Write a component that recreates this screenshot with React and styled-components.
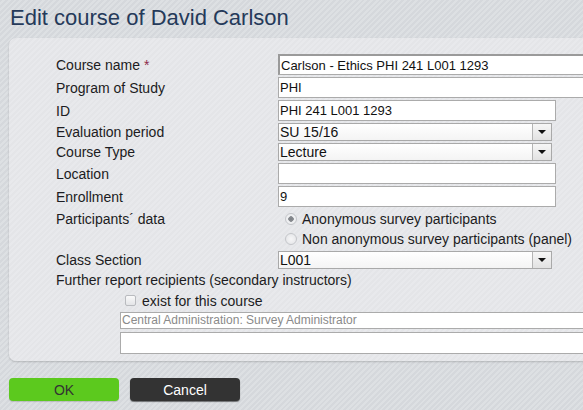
import React from "react";
import styled, { createGlobalStyle } from "styled-components";

const GlobalStyle = createGlobalStyle`
  html, body {
    margin: 0;
    padding: 0;
    overflow: hidden;
  }
  body {
    font-family: "Liberation Sans", Arial, sans-serif;
    background: repeating-linear-gradient(135deg, #d5d8dc 0px, #d5d8dc 2px, #dde0e3 2px, #dde0e3 4px);
    min-height: 410px;
  }
`;

const Page = styled.div`
  padding: 3px 0 0 9px;
  width: 620px;
`;

const Title = styled.h1`
  margin: 0 0 5px 1px;
  font-size: 22px;
  font-weight: normal;
  line-height: 30px;
  color: #253a5a;
`;

const Panel = styled.div`
  background: repeating-linear-gradient(135deg, #e4e5e8 0px, #e4e5e8 2px, #e8e9ec 2px, #e8e9ec 4px);
  border-radius: 7px;
  box-shadow: 0 1px 2px rgba(0, 0, 0, 0.18);
  padding: 16px 0 7px 47px;
`;

const Form = styled.div`
  display: grid;
  grid-template-columns: 222px 1fr;
  row-gap: 2px;
  align-items: center;
  color: #1c1c22;
  font-size: 14px;
`;

const Label = styled.div`
  line-height: 18px;
  ${(p) => p.top && "align-self: start; margin-top: 1px;"}
`;

const Star = styled.span`
  color: #8c2a4a;
`;

const TextBox = styled.div`
  box-sizing: border-box;
  height: ${(p) => p.h || 21}px;
  width: ${(p) => (p.w ? `${p.w}px` : "100%")};
  margin-top: ${(p) => p.mt || 0}px;
  background: #fff;
  border: 1px solid #ababab;
  ${(p) => p.focus && "border-top: 2px solid #9a9a9a; border-left: 2px solid #9a9a9a;"}
  padding: 0 1px;
  font-size: ${(p) => p.fs || 13}px;
  line-height: ${(p) => (p.h || 21) - 2}px;
  color: ${(p) => p.color || "#111"};
  white-space: nowrap;
  overflow: hidden;
`;

const SelectBox = styled.div`
  box-sizing: border-box;
  display: flex;
  height: 18px;
  width: 274px;
  background: linear-gradient(#fff, #f4f4f4);
  border: 1px solid #a9a9a9;
  font-size: 14px;
  line-height: 16px;
  color: #111;
`;

const SelectText = styled.div`
  flex: 1;
  padding-left: 1px;
`;

const SelectArrow = styled.div`
  width: 18px;
  border-left: 1px solid #b4b4b4;
  background: linear-gradient(#f6f6f6, #e2e2e2);
  display: flex;
  align-items: center;
  justify-content: center;

  &::after {
    content: "";
    border-left: 4px solid transparent;
    border-right: 4px solid transparent;
    border-top: 4px solid #111;
  }
`;

const RadioGroup = styled.div`
  display: flex;
  flex-direction: column;
`;

const RadioRow = styled.div`
  display: flex;
  align-items: center;
  height: 20px;
  padding-left: 7px;
  font-size: 14px;
  color: #1c1c22;
`;

const RadioDot = styled.span`
  box-sizing: border-box;
  width: 12px;
  height: 12px;
  border-radius: 50%;
  border: 1px solid #c4c6ca;
  background: ${(p) =>
    p.checked
      ? "radial-gradient(circle, #7c7f84 0, #8a8d92 2.5px, #eeeff1 3px)"
      : "radial-gradient(circle, #f6f6f7, #e2e3e6)"};
  margin-right: 5px;
`;

const WideLabel = styled.div`
  grid-column: 1 / -1;
  line-height: 18px;
`;

const Indent = styled.div`
  grid-column: 1 / -1;
  padding-left: 64px;
  display: flex;
  flex-direction: column;
`;

const CheckRow = styled.div`
  display: flex;
  align-items: center;
  height: 20px;
  padding-left: 5px;
  margin-bottom: 1px;
`;

const CheckBox = styled.span`
  box-sizing: border-box;
  width: 11px;
  height: 11px;
  border: 1px solid #b9bbbf;
  border-radius: 2px;
  background: linear-gradient(#fafafa, #e3e4e7);
  margin-right: 6px;
  margin-top: -2px;
`;

const Buttons = styled.div`
  display: flex;
  gap: 11px;
  margin-top: 17px;
`;

const Button = styled.div`
  width: 110px;
  height: 23px;
  border-radius: 4px;
  display: flex;
  align-items: center;
  justify-content: center;
  font-size: 14px;
  background: ${(p) => (p.primary ? "#5cc91e" : "#333333")};
  color: ${(p) => (p.primary ? "#333" : "#fff")};
  box-shadow: ${(p) => (p.primary ? "0 1px 1px rgba(0,0,0,0.15)" : "0 1px 1px rgba(0,0,0,0.5)")};
`;

function Select({ value }) {
  return (
    <SelectBox>
      <SelectText>{value}</SelectText>
      <SelectArrow />
    </SelectBox>
  );
}

export default function App() {
  return (
    <>
      <GlobalStyle />
      <Page>
        <Title>Edit course of David Carlson</Title>
        <Panel>
          <Form>
            <Label>
              Course name <Star>*</Star>
            </Label>
            <TextBox focus>Carlson - Ethics PHI 241 L001 1293</TextBox>

            <Label>Program of Study</Label>
            <TextBox>PHI</TextBox>

            <Label>ID</Label>
            <TextBox w={278}>PHI 241 L001 1293</TextBox>

            <Label>Evaluation period</Label>
            <Select value="SU 15/16" />

            <Label>Course Type</Label>
            <Select value="Lecture" />

            <Label>Location</Label>
            <TextBox w={278} />

            <Label>Enrollment</Label>
            <TextBox w={278}>9</TextBox>

            <Label top>Participants´ data</Label>
            <RadioGroup>
              <RadioRow>
                <RadioDot checked />
                Anonymous survey participants
              </RadioRow>
              <RadioRow>
                <RadioDot />
                Non anonymous survey participants (panel)
              </RadioRow>
            </RadioGroup>

            <Label>Class Section</Label>
            <Select value="L001" />

            <WideLabel>Further report recipients (secondary instructors)</WideLabel>
            <Indent>
              <CheckRow>
                <CheckBox />
                exist for this course
              </CheckRow>
              <TextBox h={17} fs={12} color="#8a8a8a">
                Central Administration: Survey Administrator
              </TextBox>
              <TextBox h={22} mt={3} />
            </Indent>
          </Form>
        </Panel>
        <Buttons>
          <Button primary>OK</Button>
          <Button>Cancel</Button>
        </Buttons>
      </Page>
    </>
  );
}
